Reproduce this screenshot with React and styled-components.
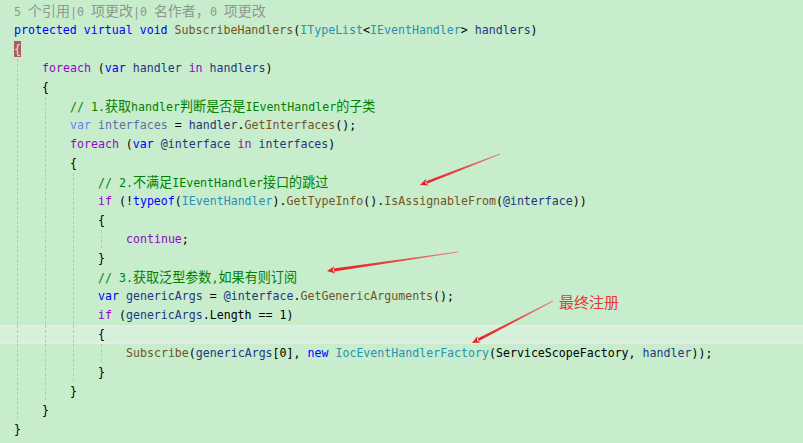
import React from "react";
import styled, { createGlobalStyle } from "styled-components";

const COLORS = {
  kw: "#0000ff",
  kwf: "#6a7ff0",
  ctl: "#8f08c4",
  type: "#2b91af",
  method: "#74531f",
  local: "#1f377f",
  localf: "#5f6ea6",
  comment: "#008000",
  plain: "#000000",
};

// each line: [indent level, tokens] ; a token is [kind, text]
const LINES = [
  [0, [["kw", "protected"], ["plain", " "], ["kw", "virtual"], ["plain", " "], ["kw", "void"], ["plain", " "], ["method", "SubscribeHandlers"], ["plain", "("], ["type", "ITypeList"], ["plain", "<"], ["type", "IEventHandler"], ["plain", "> "], ["local", "handlers"], ["plain", ")"]]],
  [0, [["match", "{"]]],
  [1, [["ctl", "foreach"], ["plain", " ("], ["kw", "var"], ["plain", " "], ["local", "handler"], ["plain", " "], ["ctl", "in"], ["plain", " "], ["local", "handlers"], ["plain", ")"]]],
  [1, [["plain", "{"]]],
  [2, [["comment", "// 1.获取handler判断是否是IEventHandler的子类"]]],
  [2, [["kwf", "var"], ["plain", " "], ["localf", "interfaces"], ["plain", " = "], ["local", "handler"], ["plain", "."], ["method", "GetInterfaces"], ["plain", "();"]]],
  [2, [["ctl", "foreach"], ["plain", " ("], ["kw", "var"], ["plain", " "], ["local", "@interface"], ["plain", " "], ["ctl", "in"], ["plain", " "], ["local", "interfaces"], ["plain", ")"]]],
  [2, [["plain", "{"]]],
  [3, [["comment", "// 2.不满足IEventHandler接口的跳过"]]],
  [3, [["ctl", "if"], ["plain", " (!"], ["kw", "typeof"], ["plain", "("], ["type", "IEventHandler"], ["plain", ")."], ["method", "GetTypeInfo"], ["plain", "()."], ["method", "IsAssignableFrom"], ["plain", "("], ["local", "@interface"], ["plain", "))"]]],
  [3, [["plain", "{"]]],
  [4, [["ctl", "continue"], ["plain", ";"]]],
  [3, [["plain", "}"]]],
  [3, [["comment", "// 3.获取泛型参数,如果有则订阅"]]],
  [3, [["kw", "var"], ["plain", " "], ["local", "genericArgs"], ["plain", " = "], ["local", "@interface"], ["plain", "."], ["method", "GetGenericArguments"], ["plain", "();"]]],
  [3, [["ctl", "if"], ["plain", " ("], ["local", "genericArgs"], ["plain", ".Length == 1)"]]],
  [3, [["plain", "{"]], true],
  [4, [["method", "Subscribe"], ["plain", "("], ["local", "genericArgs"], ["plain", "[0], "], ["kw", "new"], ["plain", " "], ["type", "IocEventHandlerFactory"], ["plain", "(ServiceScopeFactory, "], ["local", "handler"], ["plain", "));"]]],
  [3, [["plain", "}"]]],
  [2, [["plain", "}"]]],
  [1, [["plain", "}"]]],
  [0, [["plain", "}"]]],
];

const ARROWS = [
  [500, 154, 420, 185],
  [458, 252, 327, 271],
  [553, 301, 472, 343],
];

const CJK = /([\u3000-\u303f\u4e00-\u9fff\uff00-\uffef]+)/;

const withCjk = (text, size) =>
  text.split(CJK).map((part, i) =>
    CJK.test(part) ? <Cjk key={i} $size={size}>{part}</Cjk> : part
  );

const arrowPoints = (x1, y1, x2, y2) => {
  const len = Math.hypot(x2 - x1, y2 - y1);
  const dx = (x2 - x1) / len;
  const dy = (y2 - y1) / len;
  const nx = -dy;
  const ny = dx;
  const bx = x2 - dx * 7;
  const by = y2 - dy * 7;
  const p = (x, y) => `${x.toFixed(1)},${y.toFixed(1)}`;
  return {
    shaft: [
      p(x1 + nx * 0.4, y1 + ny * 0.4),
      p(bx + nx * 1.4, by + ny * 1.4),
      p(bx - nx * 1.4, by - ny * 1.4),
      p(x1 - nx * 0.4, y1 - ny * 0.4),
    ].join(" "),
    head: [
      p(x2, y2),
      p(bx - dx * 1 + nx * 3.6, by - dy * 1 + ny * 3.6),
      p(bx + dx * 1.5, by + dy * 1.5),
      p(bx - dx * 1 - nx * 3.6, by - dy * 1 - ny * 3.6),
    ].join(" "),
  };
};

const App = () => {
  return (
    <>
      <GlobalStyle />
      <Editor>
        <Lines>
          <Row>
            <Lens>{withCjk("5 个引用|0 项更改|0 名作者，0 项更改", 14)}</Lens>
          </Row>
          {LINES.map(([level, tokens, current], i) => (
            <Row key={i} $current={current}>
              {Array.from({ length: level }).map((_, j) => (
                <Indent key={j} />
              ))}
              <Code>
                {tokens.map(([kind, text], k) =>
                  kind === "match" ? (
                    <Match key={k}>{text}</Match>
                  ) : (
                    <Tok key={k} $kind={kind}>
                      {withCjk(text, 13.1)}
                    </Tok>
                  )
                )}
              </Code>
            </Row>
          ))}
        </Lines>
        <Marks width="803" height="443" viewBox="0 0 803 443">
          <defs>
            {ARROWS.map(([x1, y1, x2, y2], i) => (
              <linearGradient
                key={i}
                id={`fade${i}`}
                gradientUnits="userSpaceOnUse"
                x1={x1}
                y1={y1}
                x2={x2}
                y2={y2}
              >
                <stop offset="0" stopColor="#ee3b3f" stopOpacity="0.55" />
                <stop offset="0.5" stopColor="#ee2a2e" stopOpacity="0.9" />
                <stop offset="1" stopColor="#ec1f25" />
              </linearGradient>
            ))}
          </defs>
          {ARROWS.map(([x1, y1, x2, y2], i) => {
            const a = arrowPoints(x1, y1, x2, y2);
            return (
              <g key={i}>
                <polygon points={a.shaft} fill={`url(#fade${i})`} />
                <polygon points={a.head} fill="#ec1f25" />
              </g>
            );
          })}
        </Marks>
        <Note>最终注册</Note>
      </Editor>
    </>
  );
};

const GlobalStyle = createGlobalStyle`
  html, body {
    margin: 0;
    padding: 0;
    background: #c7edcc;
  }
`;

const Editor = styled.div`
  position: relative;
  width: 803px;
  height: 443px;
  overflow: hidden;
  background: #c7edcc;
`;

const Lines = styled.div`
  display: flex;
  flex-direction: column;
  padding-top: 2px;
`;

const Row = styled.div`
  display: flex;
  align-items: center;
  height: 19px;
  padding-left: 14px;
  white-space: pre;
  background: ${({ $current }) => ($current ? "#d5f1d9" : "transparent")};
  box-shadow: ${({ $current }) =>
    $current ? "inset 0 2px 0 #e4ede5, inset 0 -2px 0 #e4ede5" : "none"};
`;

const Indent = styled.span`
  flex: none;
  width: 28px;
  height: 100%;
  background: repeating-linear-gradient(
      to bottom,
      #b3c9b7 0 3px,
      transparent 3px 5px
    )
    3px 0 / 1px 100% no-repeat;
`;

const Code = styled.span`
  font-family: "DejaVu Sans Mono", "Liberation Mono", monospace;
  font-size: 11.6px;
  line-height: 19px;
  color: #000;
`;

const Tok = styled.span`
  color: ${({ $kind }) => COLORS[$kind]};
`;

const Cjk = styled.span`
  font-family: "Noto Sans CJK SC", sans-serif;
  font-size: ${({ $size }) => $size}px;
`;

const Match = styled.span`
  display: inline-block;
  width: 7px;
  height: 16px;
  line-height: 16px;
  background: #a85f5c;
  color: #f4dede;
`;

const Lens = styled.span`
  font-family: "DejaVu Sans Mono", "Liberation Mono", monospace;
  font-size: 11.6px;
  line-height: 19px;
  color: #8c998e;
`;

const Marks = styled.svg`
  position: absolute;
  left: 0;
  top: 0;
  pointer-events: none;
`;

const Note = styled.div`
  position: absolute;
  left: 559px;
  top: 292px;
  font-family: "Noto Sans CJK SC", sans-serif;
  font-size: 15px;
  line-height: 20px;
  color: #e8373b;
`;

export default App;
